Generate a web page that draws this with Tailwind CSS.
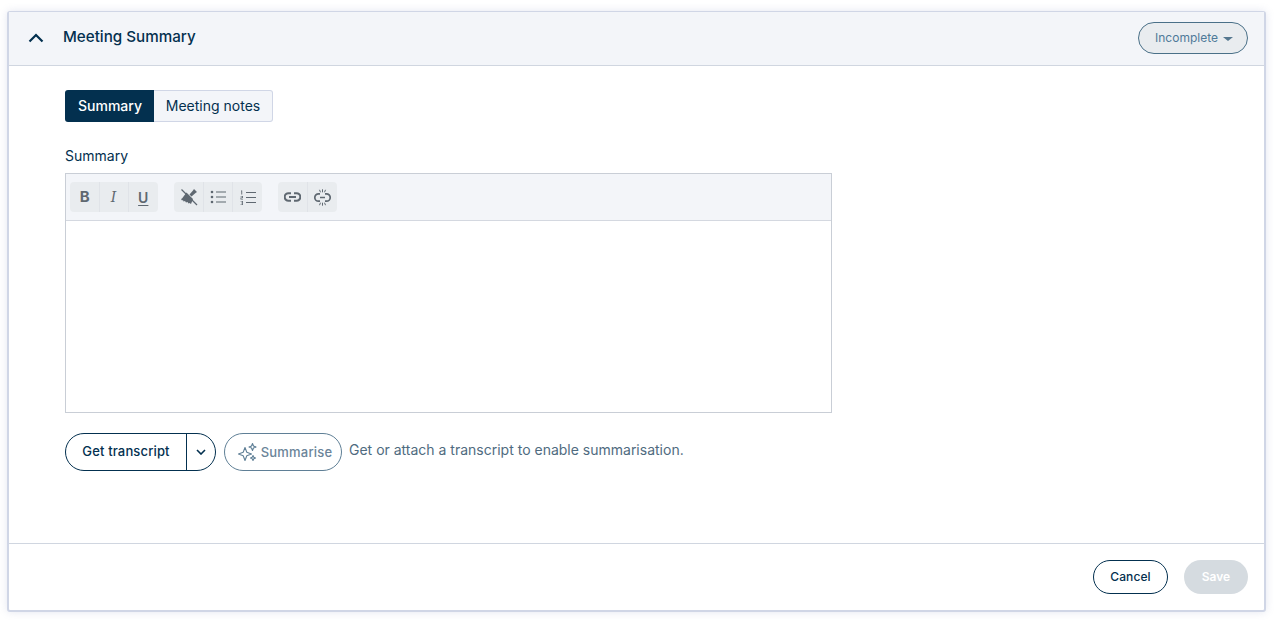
<!DOCTYPE html>
<html><head><meta charset="utf-8"><script src="https://cdn.jsdelivr.net/npm/@tailwindcss/browser@4"></script></head>
<body class="bg-white font-['Inter',sans-serif] text-[#03304f]">
<div class="w-[1275px] h-[623px] pt-[11px] pl-[7px] bg-white">
<div class="w-[1259px] h-[601px] flex flex-col rounded-[3px] border-2 border-[#d0d6e6] border-t border-b-2 bg-white shadow-[0_0_8px_rgba(120,130,180,0.2)]">
  <div class="h-[54px] shrink-0 flex items-center bg-[#f3f5f9] border-b border-[#d0d6e0] pl-[19px] pr-[16px]">
    <svg class="-mt-[2px]" width="16" height="10" viewBox="0 0 16 10" fill="none" stroke="#03304f" stroke-width="2.2"><path d="M1.5 8.500 8 2l6.500 6.500"/></svg>
    <span class="ml-[19px] -mt-[2px] text-[15.2px] font-medium">Meeting Summary</span>
    <button class="ml-auto -mt-[2px] w-[110px] h-[32px] rounded-full border border-[#4a7088] bg-[#e9ecef] flex items-center justify-center gap-[5px] text-[12px] text-[#4f7a99] pl-[2px]">Incomplete<span class="w-0 h-0 border-x-[5px] border-x-transparent border-t-[4px] border-t-[#55778f] mt-[2px]"></span></button>
  </div>
  <div class="flex-1 pl-[56px] pt-[24px]">
    <div class="flex h-[32px] w-[208px] text-[14px]">
      <div class="w-[89px] rounded-l-[3px] bg-[#03304f] text-white font-medium flex items-center justify-center pl-[1px] pb-[1px]">Summary</div>
      <div class="flex-1 rounded-r-[3px] border border-l-0 border-[#d0d6e6] bg-[#f3f5f9] flex items-center justify-center pb-[1px]">Meeting notes</div>
    </div>
    <div class="mt-[25px] text-[14px] leading-[18px]">Summary</div>
    <div class="mt-[8px] w-[767px] h-[240px] border border-[#c9ced6] flex flex-col">
      <div class="h-[47px] shrink-0 bg-[#f3f5f9] border-b border-[#d4d8e0] flex items-center gap-[16px] pl-[4px]">
        <div class="flex h-[30px] rounded-[4px] bg-[#e9ecef] divide-x divide-[#e0e3e8] text-[#5f6871]">
          <span class="w-[29.500px] flex items-center justify-center text-[15px] font-bold pl-[1px]">B</span>
          <span class="w-[29px] flex items-center justify-center text-[14px] italic font-['DejaVu_Serif',serif]">I</span>
          <span class="w-[29.500px] flex items-center justify-center text-[14px] font-semibold underline underline-offset-2">U</span>
        </div>
        <div class="flex h-[30px] rounded-[4px] bg-[#e9ecef] divide-x divide-[#e0e3e8]">
          <span class="w-[30px] flex items-center justify-center">
            <svg width="18" height="18" viewBox="0 0 18 18" fill="#5f6871"><path d="M6.500 4.500l6.500 6.500-2 5-1.500-1-1 .5-1-1.500-1.500.5L5 13l-1.500.5-.5-1.500-1 .500-1-1.500 1-.5z"/><path d="M9.500 6.500 13 2.500l1-1.500 3 3-1.500 1-4 3.500z"/><path d="M1.500 1.500 17 17" stroke="#5f6871" stroke-width="1.300"/></svg>
          </span>
          <span class="w-[29px] flex items-center justify-center">
            <svg width="16" height="14" viewBox="0 0 16 14" fill="#5f6871"><circle cx="2" cy="2" r="1.300"/><circle cx="2" cy="7" r="1.300"/><circle cx="2" cy="12" r="1.300"/><path d="M6 1.500h10v1H6zM6 6.500h10v1H6zM6 11.500h10v1H6z"/></svg>
          </span>
          <span class="w-[29px] flex items-center justify-center">
            <svg width="16" height="15" viewBox="0 0 16 15" fill="#5f6871"><path d="M6 2h10v1H6zM6 7h10v1H6zM6 12h10v1H6z"/><path d="M1 .5h1.200v4H1.300V1.300H1z"/><path d="M.5 6h2.500v2.200H1.300v.8H3v.6H.5V7.600h1.700v-1H.5z"/><path d="M.5 11h2.500v4H.5v-.6h1.700v-1.100H1v-.6h1.200v-1.100H.5z"/></svg>
          </span>
        </div>
        <div class="flex h-[30px] rounded-[4px] bg-[#e9ecef] divide-x divide-[#e0e3e8]">
          <span class="w-[30px] flex items-center justify-center">
            <svg width="17" height="10" viewBox="0 0 17 10" fill="none" stroke="#5f6871" stroke-width="2"><path d="M7 1.200H4.500a3.800 3.800 0 0 0 0 7.600H7M10 1.200h2.500a3.800 3.800 0 0 1 0 7.600H10M5 5h7"/></svg>
          </span>
          <span class="w-[29px] flex items-center justify-center">
            <svg width="17" height="17" viewBox="0 0 17 17" fill="none" stroke="#5f6871" stroke-width="1.700"><path d="M6 4.800H4.500a3.700 3.700 0 0 0 0 7.400H6M11 4.800h1.500a3.700 3.700 0 0 1 0 7.400H11M6 8.500h5"/><path stroke-width="1" d="M5.500 .8l1 2.500M8.500.3v3M11.500 .8l-1 2.500M5.500 16.200l1-2.500M8.500 16.700v-3M11.500 16.200l-1-2.500"/></svg>
          </span>
        </div>
      </div>
      <div class="flex-1 bg-white"></div>
    </div>
    <div class="mt-[20px] flex items-center">
      <div class="flex h-[38px] w-[151px] rounded-full border border-[#03304f] text-[13px] font-medium tracking-[0.15px]">
        <span class="w-[121px] flex items-center justify-center border-r border-[#03304f]">Get transcript</span>
        <span class="flex-1 flex items-center justify-center"><svg width="10" height="6" viewBox="0 0 10 6" fill="none" stroke="#03304f" stroke-width="1.600"><path d="M1 1l4 4 4-4"/></svg></span>
      </div>
      <div class="ml-[8px] flex h-[38px] w-[118px] rounded-full border border-[#5f7f96] items-center justify-center gap-[3px] text-[13px] font-medium text-[#6b8499] tracking-[0.2px]">
        <svg class="ml-[3px]" width="21" height="21" viewBox="0 0 21 21" fill="none" stroke="#5f7f96" stroke-width="1.100" stroke-linejoin="round"><path d="M8 5.500 9.800 10.200 14.500 12 9.800 13.800 8 18.500 6.200 13.800 1.500 12 6.200 10.200z"/><path d="M15.500 1.500l1 2.500 2.500 1-2.500 1-1 2.500-1-2.500-2.500-1 2.500-1z"/><path d="M16 13.500l.8 1.700 1.700.8-1.700.8-.8 1.700-.8-1.700-1.700-.8 1.700-.8z"/></svg>
        <span class="pt-[2px]">Summarise</span>
      </div>
      <span class="ml-[7px] text-[14px] text-[#4f6b80] -mt-[5px]">Get or attach a transcript to enable summarisation.</span>
    </div>
  </div>
  <div class="h-[67px] shrink-0 border-t border-[#d0d6e0] flex items-center justify-end gap-[16px] pr-[16px]">
    <button class="w-[75px] h-[34px] rounded-full border border-[#03304f] text-[12px] font-medium tracking-[0.1px]">Cancel</button>
    <button class="w-[64px] h-[34px] rounded-full bg-[#d5dbe0] text-white text-[12px] font-semibold">Save</button>
  </div>
</div>
</div>
</body></html>
